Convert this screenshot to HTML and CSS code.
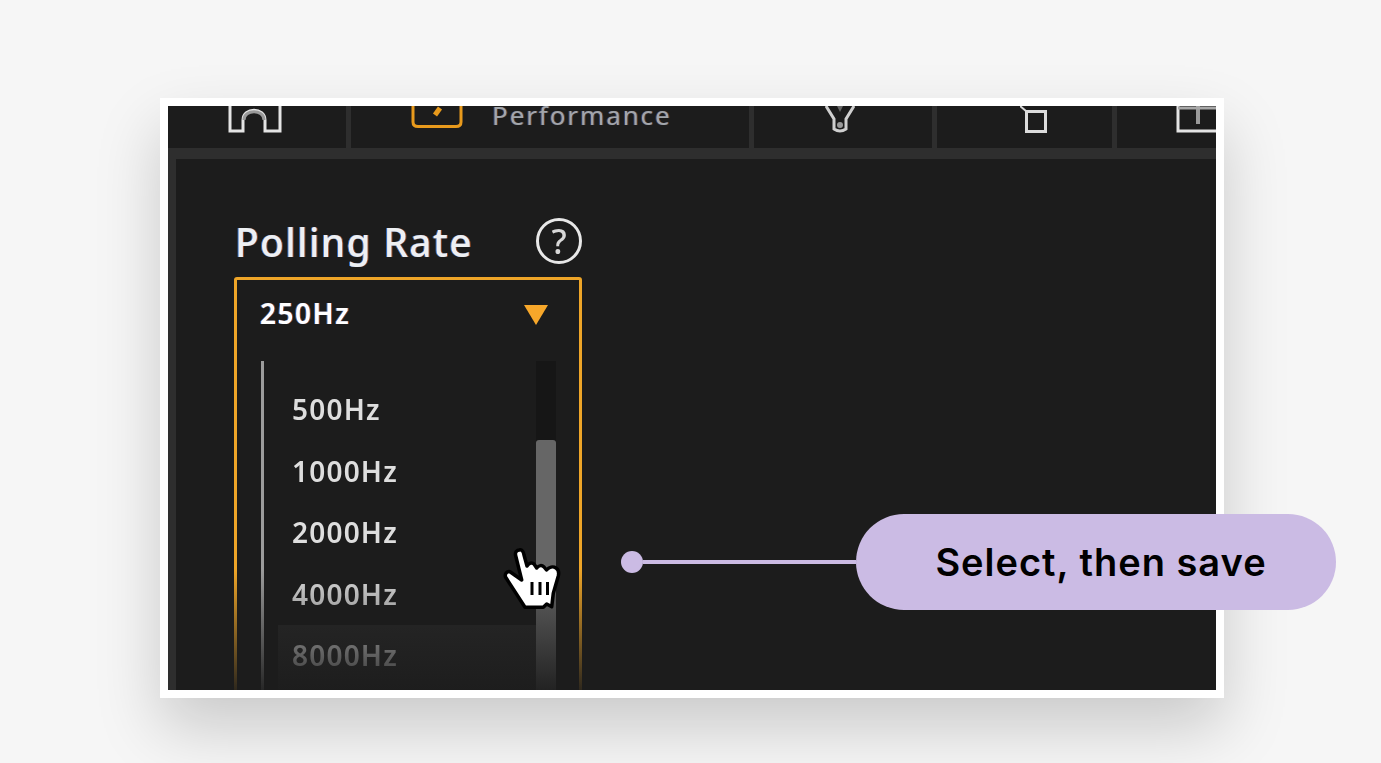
FILE: index.html
```html
<!DOCTYPE html>
<html lang="en">
<head>
<meta charset="utf-8">
<title>Polling Rate</title>
<link rel="stylesheet" href="styles.css">
</head>
<body>
<main class="card">
  <div class="screen">
    <nav class="tabs">
      <div class="tab tab-home">
        <svg class="icon" width="54" height="27" viewBox="0 0 54 27"><path d="M2 0V25H15V14C15 1 37 1 37 14V25H52V0" fill="none" stroke="#e4e4e4" stroke-width="3"/><path d="M16 14C16 3 36 3 36 14" fill="none" stroke="#999" stroke-width="3"/></svg>
      </div>
      <div class="tab tab-perf">
        <svg class="icon" width="54" height="27" viewBox="0 0 54 27"><path d="M3 0V16Q3 20.500 8 20.500H46Q51 20.500 51 16V0" fill="none" stroke="#e89a1c" stroke-width="3"/><path d="M25 9L30 2" stroke="#e89a1c" stroke-width="5"/></svg>
        <span class="tab-label">Performance</span>
      </div>
      <div class="tab tab-bulb">
        <svg class="icon" width="30" height="27" viewBox="0 0 30 27"><path d="M1 0L9 13V23Q15 27 21 23V13L29 0" fill="none" stroke="#cfcfcf" stroke-width="3"/><path d="M12 0L15 6L18 0" fill="#666"/><circle cx="15" cy="19" r="3" fill="#9a9a9a"/></svg>
      </div>
      <div class="tab tab-box">
        <svg class="icon" width="30" height="27" viewBox="0 0 30 27"><path d="M0 0L6 5" stroke="#d8d8d8" stroke-width="2"/><rect x="6.500" y="5.500" width="19" height="20" fill="none" stroke="#dcdcdc" stroke-width="3"/></svg>
      </div>
      <div class="tab tab-plus">
        <svg class="icon" width="40" height="27" viewBox="0 0 40 27"><path d="M2 0V25H40" fill="none" stroke="#e4e4e4" stroke-width="3"/><path d="M22 0V18" stroke="#9a9a9a" stroke-width="4"/><path d="M2 2H40" stroke="#a8a8a8" stroke-width="3"/></svg>
      </div>
    </nav>
    <section class="panel">
      <header class="title-row">
        <h1 class="title">Polling Rate</h1>
        <span class="help">?</span>
      </header>
      <div class="dropdown">
        <div class="selected">
          <span class="selected-text">250Hz</span>
          <span class="caret"></span>
        </div>
        <div class="list-wrap">
          <div class="rail"></div>
          <ul class="options">
            <li class="option">500Hz</li>
            <li class="option">1000Hz</li>
            <li class="option">2000Hz</li>
            <li class="option">4000Hz</li>
            <li class="option option-active">8000Hz</li>
          </ul>
          <div class="track"><div class="thumb"></div></div>
        </div>
        <div class="fade"></div>
        <svg class="hand" width="60" height="66" viewBox="0 0 60 66">
          <path d="M16.300 5C19 4 20.500 7 21 10L24 21C26 18 29 17 31 19L33.700 23C36 20 39 20 41 22L43.500 25C46 22 50 21 53 23C56 25 56 28 55.300 31L50.300 48.300L48.700 61.700L43.700 59L40.300 62.300H22L2.500 32C1.500 29 4 26 7 26.700L18.700 35L12.500 10C12 7 14 5 16.300 5Z" fill="#fff" stroke="#000" stroke-width="3.500" stroke-linejoin="round"/>
          <path d="M29 37V50M37 37V50M44.500 37V50" stroke="#000" stroke-width="3"/>
        </svg>
      </div>
    </section>
  </div>
  <aside class="callout">
    <span class="dot"></span>
    <span class="line"></span>
    <span class="pill">Select, then save</span>
  </aside>
</main>
</body>
</html>
```
FILE: styles.css
```css
* { box-sizing: border-box; }
html, body { margin: 0; height: 100%; }
body {
  background: #f6f6f6;
  padding: 98px 0 0 160px;
  overflow: hidden;
  font-family: "Noto Sans", "Open Sans", sans-serif;
}
.card {
  position: relative;
  width: 1064px;
  height: 600px;
  border: 8px solid #fff;
  box-shadow: 0 30px 60px rgba(0, 0, 0, .18);
}
.screen {
  width: 100%;
  height: 100%;
  background: #2e2e2e;
}
.tabs {
  display: flex;
  gap: 5px;
  height: 42px;
}
.tab {
  display: flex;
  align-items: flex-end;
  height: 42px;
  background: #1c1c1c;
  padding-bottom: 15px;
}
.icon { flex: none; display: block; filter: blur(.5px); }
.tab-home { width: 178px; padding-left: 60px; }
.tab-perf { width: 398px; padding-left: 59px; }
.tab-bulb { width: 178px; padding-left: 71px; }
.tab-box { width: 175px; padding-left: 83px; }
.tab-plus { width: 99px; padding-left: 59px; }
.tab-label {
  align-self: flex-start;
  margin-left: 28px;
  font-size: 26px;
  line-height: 18px;
  letter-spacing: 1.900px;
  white-space: nowrap;
  color: #a2a6aa;
  filter: blur(.5px);
  text-shadow: -1px 0 rgba(60, 110, 220, .45), 1px 0 rgba(220, 120, 40, .4);
}
.panel {
  height: 531px;
  margin-top: 11px;
  margin-left: 8px;
  padding: 58px 0 0 59px;
  background: #1c1c1c;
  overflow: hidden;
}
.title-row {
  display: flex;
  align-items: center;
  justify-content: space-between;
  width: 347px;
  height: 48px;
  margin-bottom: 12px;
}
.title {
  margin: 0;
  padding-top: 2px;
  font-size: 39px;
  font-weight: 500;
  line-height: 46px;
  letter-spacing: 1.300px;
  white-space: nowrap;
  color: #eef0f2;
  filter: blur(.4px);
  text-shadow: -1px 0 rgba(60, 140, 255, .75), 1px 0 rgba(240, 110, 40, .6);
}
.help {
  display: flex;
  align-items: center;
  justify-content: center;
  width: 46px;
  height: 46px;
  border: 3px solid #e8e8e8;
  border-radius: 50%;
  font-size: 34px;
  font-weight: 500;
  color: #d8d8d8;
  filter: blur(.5px);
}
.dropdown {
  position: relative;
  width: 348px;
  height: 430px;
  margin-left: -1px;
  border: 3px solid #eea528;
  border-radius: 3px;
  background: #1c1c1c;
}
.selected {
  display: flex;
  align-items: center;
  justify-content: space-between;
  height: 66px;
  padding: 0 31px 0 23px;
}
.selected-text {
  font-size: 28px;
  font-weight: 600;
  line-height: 36px;
  letter-spacing: 1.500px;
  color: #fff;
  filter: blur(.5px);
  text-shadow: -1px 0 rgba(60, 140, 255, .7), 1px 0 rgba(240, 110, 40, .6);
}
.caret {
  width: 0;
  height: 0;
  margin-top: 3px;
  border-left: 12.500px solid transparent;
  border-right: 12.500px solid transparent;
  border-top: 20px solid #f7a72a;
  filter: blur(.4px);
}
.list-wrap {
  display: flex;
  margin-top: 15px;
  padding-left: 24px;
}
.rail {
  flex: none;
  width: 3px;
  height: 340px;
  margin-right: 14px;
  background: #9c9c9c;
}
.options {
  flex: none;
  width: 258px;
  margin: 0;
  padding: 18px 0 0;
  list-style: none;
}
.option {
  height: 61.500px;
  padding-left: 14px;
  font-size: 28px;
  font-weight: 600;
  line-height: 61.500px;
  letter-spacing: 1.200px;
  color: #dedede;
  filter: blur(.6px);
}
.option-active { background: #2a2a2a; height: 80px; }
.track {
  flex: none;
  width: 20px;
  height: 340px;
  padding-top: 79px;
  background: #161616;
}
.thumb {
  height: 261px;
  background: #666;
  border-radius: 3px 3px 0 0;
}
.fade {
  position: absolute;
  left: -4px;
  right: -4px;
  top: 289px;
  height: 122px;
  background: linear-gradient(to bottom, rgba(28, 28, 28, 0), rgba(28, 28, 28, .92));
}
.hand {
  position: absolute;
  left: 266px;
  top: 265px;
}
.callout {
  position: absolute;
  left: 453px;
  top: 408px;
  display: flex;
  align-items: center;
}
.dot {
  width: 22px;
  height: 22px;
  border-radius: 50%;
  background: #cbbbe4;
}
.line {
  width: 213px;
  height: 4px;
  background: #cbbbe4;
}
.pill {
  display: flex;
  align-items: center;
  justify-content: center;
  width: 480px;
  height: 96px;
  padding-left: 10px;
  border-radius: 48px;
  background: #cbbbe4;
  font-family: Inter, sans-serif;
  font-size: 38px;
  font-weight: 600;
  letter-spacing: 1px;
  color: #000;
}
```
